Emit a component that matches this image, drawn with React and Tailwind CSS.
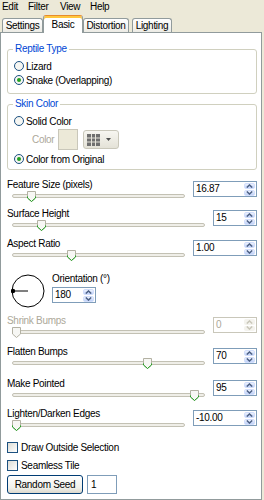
import React from 'react';

const sliders = [
  { label: 'Feature Size (pixels)', value: '16.87', wide: true, thumb: 'left-[20px]', mt: 'mt-[9px]' },
  { label: 'Surface Height', value: '15', wide: false, thumb: 'left-[30px]', mt: 'mt-[6px]' },
  { label: 'Aspect Ratio', value: '1.00', wide: true, thumb: 'left-[60px]', mt: 'mt-[7px]' },
];

const sliders2 = [
  { label: 'Shrink Bumps', value: '0', wide: false, thumb: 'left-[5px]', mt: 'mt-[7px]', disabled: true },
  { label: 'Flatten Bumps', value: '70', wide: false, thumb: 'left-[136px]', mt: 'mt-[8px]' },
  { label: 'Make Pointed', value: '95', wide: false, thumb: 'left-[183px]', mt: 'mt-[9px]' },
  { label: 'Lighten/Darken Edges', value: '-10.00', wide: true, thumb: 'left-[5px]', mt: 'mt-[7px]' },
];

function Arrow({ up, disabled }) {
  return (
    <svg width="7" height="4" viewBox="0 0 7 4">
      <path
        d={up ? 'M0.8 3.6 L3.5 0.9 L6.2 3.6' : 'M0.8 0.4 L3.5 3.1 L6.2 0.4'}
        fill="none"
        stroke={disabled ? '#c9c7ba' : '#4d6185'}
        strokeWidth="1.4"
      />
    </svg>
  );
}

function Spin({ value, wide, disabled }) {
  const btn = disabled
    ? 'flex flex-1 items-center justify-center rounded-[2px] bg-[#f4f3ee]'
    : 'flex flex-1 items-center justify-center rounded-[2px] bg-[linear-gradient(#eef3fe,#bfd1f8)] border border-[#d2defc]';
  return (
    <div
      className={`mt-[2px] flex h-[16px] shrink-0 border bg-white ${wide ? 'w-[64px]' : 'w-[44px]'} ${
        disabled ? 'border-[#c9c7ba]' : 'border-[#7f9db9]'
      }`}
    >
      <span className={`flex-1 pl-[2px] leading-[14px] ${disabled ? 'text-[#aca899]' : 'text-black'}`}>{value}</span>
      <div className="flex w-[13px] flex-col gap-px p-px">
        <div className={btn}>
          <Arrow up disabled={disabled} />
        </div>
        <div className={btn}>
          <Arrow disabled={disabled} />
        </div>
      </div>
    </div>
  );
}

function Thumb({ disabled }) {
  return (
    <svg width="9" height="11" viewBox="0 0 9 11">
      <path d="M0.5 0.5 H8.5 V7 L4.5 10.5 L0.5 7 Z" fill="#f7f7f4" stroke="#b3b1a3" />
      {!disabled && <path d="M0.5 5.5 V7 L4.5 10.5 L8.5 7 V5.5" fill="none" stroke="#21a121" />}
    </svg>
  );
}

function SliderRow({ s }) {
  return (
    <div className={`flex items-start gap-[8px] ${s.mt}`}>
      <div className="flex-1">
        <div className={`h-[12px] leading-[12px] ${s.disabled ? 'text-[#aca899]' : 'text-black'}`}>{s.label}</div>
        <div className="relative h-[11px] pt-[3px]">
          <div className="ml-[5px] h-[4px] rounded-[2px] border border-[#c3c1b4] bg-[#efeee8]" />
          <div className={`absolute top-0 ${s.thumb}`}>
            <Thumb disabled={s.disabled} />
          </div>
        </div>
      </div>
      <Spin value={s.value} wide={s.wide} disabled={s.disabled} />
    </div>
  );
}

function Radio({ checked, label }) {
  return (
    <div className="flex h-[14px] items-center gap-[2px] pl-[6px]">
      <svg width="10" height="10" viewBox="0 0 10 10">
        <circle cx="5" cy="5" r="4.5" fill="#f6f6f2" stroke="#1c5180" />
        {checked && <circle cx="5" cy="5" r="2" fill="#21a121" />}
      </svg>
      <span>{label}</span>
    </div>
  );
}

function Check({ label, mt }) {
  return (
    <div className={`flex h-[14px] items-center gap-[3px] ${mt}`}>
      <div className="h-[11px] w-[11px] border border-[#1c5180] bg-[linear-gradient(135deg,#dcdcd5,#ffffff)]" />
      <span>{label}</span>
    </div>
  );
}

function Group({ title, mt, pb, children }) {
  return (
    <fieldset className={`rounded-[3px] border border-[#d0d0bf] ${mt} ${pb}`}>
      <legend className="ml-[5px] h-[12px] px-[2px] leading-[12px] text-[#0046d5]">{title}</legend>
      {children}
    </fieldset>
  );
}

export default function App() {
  const tab = 'h-[14px] rounded-t-[3px] border-x border-t border-[#919b9c] bg-[linear-gradient(#ffffff,#ecebe5)] text-center leading-[13px]';
  return (
    <div className="flex h-[500px] w-[264px] flex-col overflow-hidden bg-[#ece9d8] font-['Liberation_Sans',Arial,sans-serif] text-[10px] tracking-[-0.3px] text-black">
      {/* Menu */}
      <div className="flex h-[14px] items-center pl-[2px] leading-[14px]">
        <span className="w-[26px]">Edit</span>
        <span className="w-[32px]">Filter</span>
        <span className="w-[30px]">View</span>
        <span>Help</span>
      </div>

      {/* Tabs */}
      <div className="flex h-[18px] items-end">
        <div className={`ml-[2px] w-[41px] ${tab}`}>Settings</div>
        <div className="relative z-10 -mb-px h-[18px] w-[40px] rounded-t-[3px] border-x border-t border-x-[#919b9c] border-t-[#e68b2c] bg-white pt-[3px] text-center leading-[12px] shadow-[inset_0_2px_0_#ffc73c]">
          Basic
        </div>
        <div className={`w-[46px] ${tab}`}>Distortion</div>
        <div className={`ml-[3px] w-[40px] ${tab}`}>Lighting</div>
      </div>

      {/* Panel */}
      <div className="flex w-[262px] flex-1 flex-col border border-[#919b9c] bg-white pl-[6px] pr-[4px]">
        <Group title="Reptile Type" mt="mt-[10px]" pb="pb-[6px]">
          <div className="pt-[4px]">
            <Radio label="Lizard" />
            <Radio checked label="Snake (Overlapping)" />
          </div>
        </Group>

        <Group title="Skin Color" mt="mt-[4px]" pb="pb-[3px]">
          <div className="pt-[4px]">
            <Radio label="Solid Color" />
            <div className="mt-[1px] flex h-[21px] items-center pl-[24px]">
              <span className="w-[26px] text-[#aca899]">Color</span>
              <div className="h-[21px] w-[20px] border border-[#c9c7ba] bg-[#ece9d8]" />
              <div className="ml-[5px] flex h-[19px] w-[36px] items-center gap-[6px] rounded-[3px] border border-[#c9c7ba] bg-[linear-gradient(#f7f6f1,#e4e2d7)] pl-[3px]">
                <svg width="13" height="12" viewBox="0 0 13 12">
                  <rect x="0" y="0" width="13" height="12" fill="#6f6f6f" />
                  <path d="M4.5 0 V12 M8.5 0 V12 M0 4 H13 M0 8 H13" stroke="#e6e4da" strokeWidth="1" />
                </svg>
                <svg width="5" height="3" viewBox="0 0 5 3">
                  <path d="M0 0 H5 L2.5 3 Z" fill="#4f4f4f" />
                </svg>
              </div>
            </div>
            <div className="mt-[2px]">
              <Radio checked label="Color from Original" />
            </div>
          </div>
        </Group>

        {sliders.map((s) => (
          <SliderRow key={s.label} s={s} />
        ))}

        {/* Orientation */}
        <div className="mt-[12px] flex items-start">
          <svg className="ml-[4px] mt-[1px]" width="34" height="34" viewBox="0 0 34 34">
            <circle cx="17" cy="17" r="16" fill="none" stroke="#000" strokeWidth="1" />
            <line x1="1.5" y1="17" x2="17" y2="17" stroke="#000" strokeWidth="1" />
            <circle cx="2" cy="17" r="2.2" fill="#000" />
          </svg>
          <div className="ml-[7px]">
            <div className="h-[12px] leading-[12px]">Orientation (°)</div>
            <Spin value="180" />
          </div>
        </div>

        {sliders2.map((s) => (
          <SliderRow key={s.label} s={s} />
        ))}

        <Check label="Draw Outside Selection" mt="mt-[9px]" />
        <Check label="Seamless Tile" mt="mt-[4px]" />

        <div className="mt-[3px] flex items-center gap-[4px]">
          <button className="h-[19px] w-[76px] rounded-[3px] border border-[#003c74] bg-[linear-gradient(#ffffff,#f0f0ea_70%,#dcd8cc)] text-center leading-[17px]">
            Random Seed
          </button>
          <div className="h-[19px] w-[30px] border border-[#7f9db9] bg-white pl-[3px] leading-[17px]">1</div>
        </div>
      </div>
    </div>
  );
}
